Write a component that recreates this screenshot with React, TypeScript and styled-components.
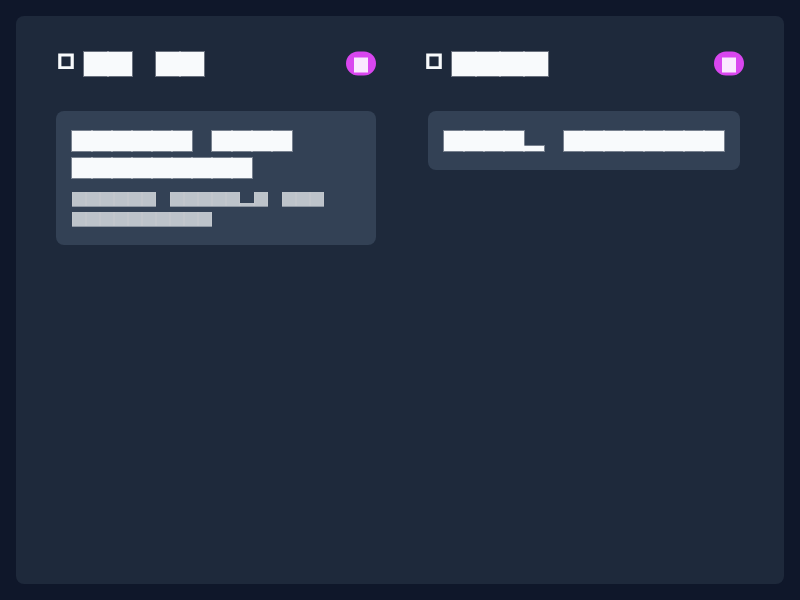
import React from "react";
import styled, { createGlobalStyle } from "styled-components";

const Global = createGlobalStyle`
  *, *::before, *::after { box-sizing: border-box; }
  body { margin: 0; background: #0f172a; font-family: "Liberation Sans", sans-serif; }
`;

const Page = styled.main`
  height: 600px;
  padding: 16px;
`;

const Board = styled.div`
  display: flex;
  gap: 52px;
  height: 568px;
  padding: 35px 40px 40px;
  border-radius: 8px;
  background: #1e293b;
`;

const Column = styled.section<{ $width: number }>`
  width: ${(p) => p.$width}px;
`;

const Header = styled.header<{ $shift?: boolean }>`
  display: flex;
  align-items: flex-start;
  height: 60px;
  margin-left: ${(p) => (p.$shift ? -4 : 0)}px;
  margin-right: ${(p) => (p.$shift ? -4 : 0)}px;
  padding-left: 2px;
`;

const Handle = styled.svg`
  display: block;
  width: 16px;
  height: 16px;
  margin: 2px 10px 0 0;
`;

const Badge = styled.span`
  display: flex;
  width: 30px;
  height: 24px;
  margin-left: auto;
  padding: 5.5px 8px 0;
  border-radius: 12px;
  background: #d946ef;
  transform: translateY(0.5px);
`;

const Card = styled.article`
  padding: 20px 16px 19px;
  border-radius: 8px;
  background: #334155;
`;

const Line = styled.div<{ $size: number; $gap?: number; $muted?: boolean }>`
  display: flex;
  gap: 1em;
  font-size: ${(p) => p.$size}px;
  margin-top: ${(p) => p.$gap ?? 0}px;
  opacity: ${(p) => (p.$muted ? 0.7 : 1)};
`;

const Word = styled.span`
  display: flex;
  align-items: flex-end;
  height: 1em;
  isolation: isolate;
`;

/* The soft edge sits on a layer below the squares, so neighbours merge. */
const Block = styled.span<{ $low: boolean; $small: boolean }>`
  position: relative;
  width: 1em;
  height: ${(p) => (p.$low ? (p.$small ? "3px" : "5px") : "1em")};
  background: #f8fafc;
  box-shadow: ${(p) =>
    p.$small ? "inset 1px 0 0 #fff, inset -1px 0 0 #fff" : "none"};

  &::before {
    content: "";
    position: absolute;
    z-index: -1;
    inset: 0;
    box-shadow: ${(p) =>
      p.$small
        ? "0 1px 0 rgba(248,250,252,.65)"
        : "0 0 0 1px rgba(248,250,252,.35)"};
  }
`;

const Tile = styled.span`
  width: 14px;
  height: 15px;
  background: #fae8ff;
`;

/* Each word is a run of em squares: "x" is a full square, "p" a descender. */
function Blocks({ text, size, gap, muted }: { text: string; size: number; gap?: number; muted?: boolean }) {
  return (
    <Line $size={size} $gap={gap} $muted={muted}>
      {text.split(" ").map((word, i) => (
        <Word key={i}>
          {word.split("").map((c, j) => (
            <Block key={j} $low={c === "p"} $small={size < 16} />
          ))}
        </Word>
      ))}
    </Line>
  );
}

function ColumnHeader({ title, shift }: { title: string; shift?: boolean }) {
  return (
    <Header $shift={shift}>
      <Handle viewBox="0 0 16 16">
        <path
          d="M.2 .6H15.8V16H.2ZM3.4 3.5V13.3H12.6V3.5Z"
          fill="#f8fafc"
          fillRule="evenodd"
        />
      </Handle>
      <Blocks text={title} size={24} gap={1} />
      <Badge>
        <Tile />
      </Badge>
    </Header>
  );
}

export default function App() {
  return (
    <>
      <Global />
      <Page>
        <Board>
          <Column $width={320}>
            <ColumnHeader title="xx xx" />
            <Card>
              <Blocks text="xxxxxx xxxx" size={20} />
              <Blocks text="xxxxxxxxx" size={20} gap={7} />
              <Blocks text="xxxxxx xxxxxpx xxx" size={14} gap={14} muted />
              <Blocks text="xxxxxxxxxx" size={14} gap={6} muted />
            </Card>
          </Column>
          <Column $width={312}>
            <ColumnHeader title="xxxx" shift />
            <Card>
              <Blocks text="xxxxp xxxxxxxx" size={20} />
            </Card>
          </Column>
        </Board>
      </Page>
    </>
  );
}
